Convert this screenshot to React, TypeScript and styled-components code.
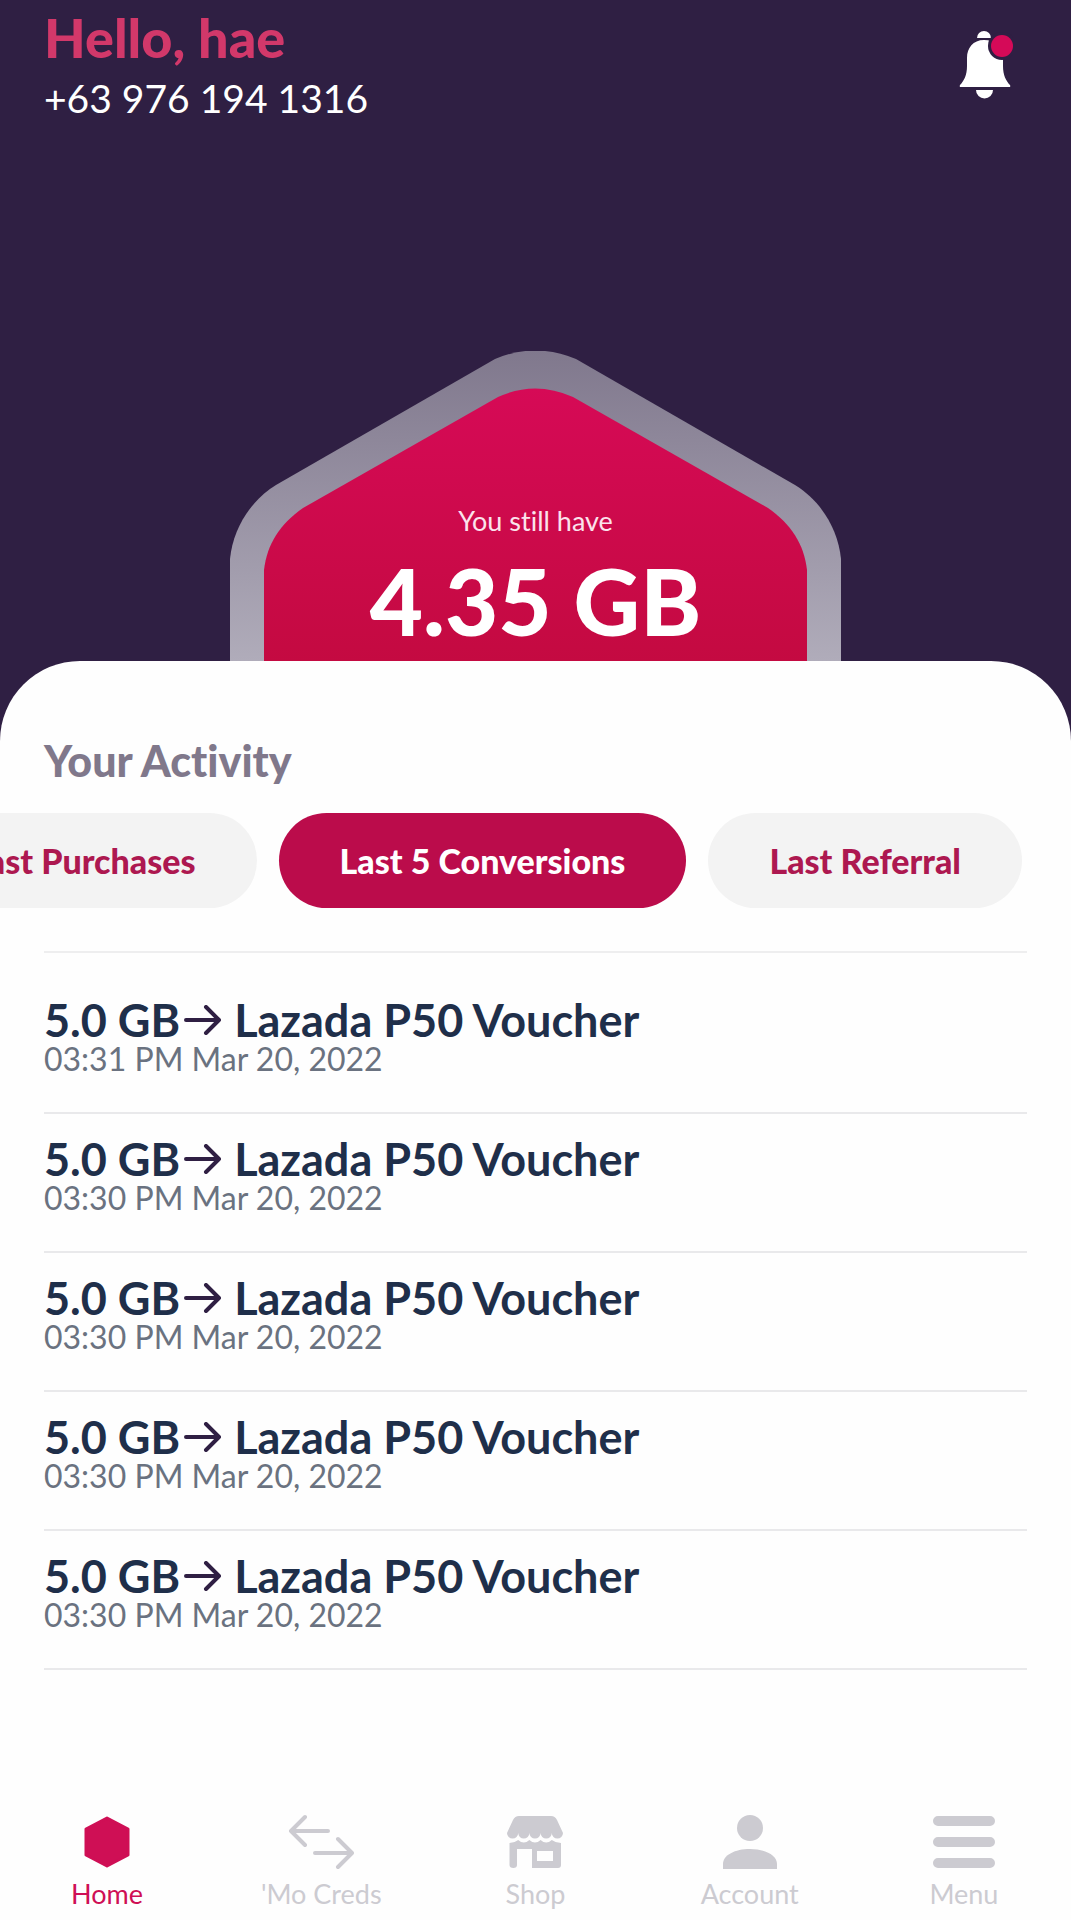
import React from "react";
import styled, { createGlobalStyle } from "styled-components";

const GlobalStyle = createGlobalStyle`
  *, *::before, *::after { box-sizing: border-box; }
  html { background: #fefefe; }
  body {
    margin: 0;
    font-family: Lato, "Liberation Sans", sans-serif;
    font-variant-ligatures: none;
  }
  h1, h2, h3, p, ul { margin: 0; padding: 0; font-weight: 400; }
  ul { list-style: none; }
  button { font-family: inherit; border: 0; cursor: pointer; }
`;

const Screen = styled.div`
  display: flex;
  flex-direction: column;
  min-height: 100vh;
  overflow-x: hidden;
  background: #2f1f43;
`;

const Header = styled.header`
  display: flex;
  justify-content: space-between;
  align-items: flex-start;
  padding: 8px 58px 0 44px;
`;

const Greeting = styled.h1`
  && { font-weight: 900; }
  font-size: 54px;
  line-height: 60px;
  color: #d2386a;
`;

const Phone = styled.p`
  font-size: 39px;
  line-height: 60px;
  color: #fff;
`;

const BellButton = styled.button`
  padding: 0;
  margin-top: 23px;
  background: none;
  line-height: 0;
`;

const Balance = styled.section`
  display: grid;
  justify-content: center;
  margin-top: 223px;
`;

const HexShape = styled.svg`
  grid-area: 1 / 1;
  display: block;
`;

const BalanceText = styled.div`
  grid-area: 1 / 1;
  display: flex;
  flex-direction: column;
  align-items: center;
  padding-top: 150px;
  color: #fff;
`;

const BalanceLabel = styled.p`
  font-size: 27px;
  line-height: 40px;
  color: #fbe3ec;
`;

const BalanceValue = styled.p`
  && { font-weight: 900; }
  font-size: 92px;
  line-height: 120px;
`;

const Sheet = styled.main`
  flex: 1;
  display: flex;
  flex-direction: column;
  padding-top: 70px;
  border-radius: 80px 80px 0 0;
  background: #fefefe;
`;

const SheetTitle = styled.h2`
  && { font-weight: 900; }
  padding: 0 44px;
  font-size: 43px;
  line-height: 60px;
  color: #80788b;
`;

const Filters = styled.div`
  display: flex;
  justify-content: flex-end;
  gap: 22px;
  padding-right: 49px;
  margin-top: 22px;
`;

const Pill = styled.button<{ $active?: boolean }>`
  flex: none;
  height: 95px;
  padding: 0 61px;
  border-radius: 48px;
  font-size: 34px;
  font-weight: 900;
  white-space: nowrap;
  color: ${(p) => (p.$active ? "#fff" : "#ad1850")};
  background: ${(p) => (p.$active ? "#bb0c4b" : "#f3f3f3")};
`;

const History = styled.ul`
  margin: 43px 44px 0;
  padding-top: 22px;
  border-top: 2px solid #eeeeef;
`;

const Row = styled.li`
  height: 139px;
  padding-top: 21px;
  border-bottom: 2px solid #e9e9eb;
`;

const RowTitle = styled.h3`
  && { font-weight: 700; }
  display: flex;
  align-items: center;
  font-size: 45px;
  line-height: 48px;
  color: #1f2f4a;
`;

const ArrowIcon = styled.svg`
  flex: none;
  margin: 0 12px 0 4px;
`;

const RowDate = styled.p`
  font-size: 32px;
  line-height: 30px;
  color: #6a7280;
`;

const TabBar = styled.nav`
  display: grid;
  grid-template-columns: repeat(5, 1fr);
  margin-top: auto;
  padding-bottom: 6px;
`;

const Tab = styled.a<{ $active?: boolean }>`
  display: flex;
  flex-direction: column;
  align-items: center;
  gap: 4px;
  text-decoration: none;
  font-size: 27px;
  line-height: 40px;
  color: ${(p) => (p.$active ? "#cf0f55" : "#cccbd1")};
`;

const BellIcon = () => (
  <svg width="54" height="68" viewBox="0 0 54 68" aria-hidden="true">
    <path d="M18 7a7 7 0 0 1 14 0z" fill="#fff" />
    <path
      d="M25 9C14 9 8 17 8 27v8c0 9-3 15-7 19q-1 2 1 2h48q2 0 1-2c-4-4-7-10-7-19v-8C44 17 36 9 25 9z"
      fill="#fff"
    />
    <path d="M17 59h17a8 8 0 0 1-17 0z" fill="#fff" />
    <circle cx="43" cy="15" r="14" fill="#2f1f43" />
    <circle cx="43" cy="15" r="11" fill="#d50a58" />
  </svg>
);

const Arrow = () => (
  <ArrowIcon width="38" height="30" viewBox="0 0 38 30" aria-label="to">
    <path
      d="M2 15h33M22 2l13 13-13 13"
      fill="none"
      stroke="#2f1f43"
      strokeWidth="4"
      strokeLinecap="round"
      strokeLinejoin="round"
    />
  </ArrowIcon>
);

const HomeIcon = () => (
  <svg width="66" height="56" viewBox="0 0 66 56" aria-hidden="true">
    <path
      d="M33 4 54 15v26L33 52 12 41V15z"
      fill="currentColor"
      stroke="currentColor"
      strokeWidth="3"
      strokeLinejoin="round"
    />
  </svg>
);

const CredsIcon = () => (
  <svg width="66" height="56" viewBox="0 0 66 56" aria-hidden="true">
    <path
      d="M40 17H3M17 3 3 17l14 14M27 39h36M50 25l14 14-14 14"
      fill="none"
      stroke="currentColor"
      strokeWidth="4"
      strokeLinecap="round"
      strokeLinejoin="round"
    />
  </svg>
);

const ShopIcon = () => (
  <svg width="66" height="56" viewBox="0 0 66 56" aria-hidden="true">
    <path
      d="M17 2h32q4 0 6 4l6 13a5.6 5.6 0 0 1-11.2 0a5.6 5.6 0 0 1-11.2 0a5.6 5.6 0 0 1-11.2 0a5.6 5.6 0 0 1-11.2 0a5.6 5.6 0 0 1-11.2 0l6-13q2-4 6-4z"
      fill="currentColor"
    />
    <path
      fillRule="evenodd"
      d="M7.5 29q5 0 8.7-3q5.6 5 11.2 0q5.6 5 11.2 0q5.6 5 11.2 0q4 3 9.2 3v22q0 3-3 3H30V35H15v16q0 3-3.7 3t-3.8-3zM35 37v10h16V37z"
      fill="currentColor"
    />
  </svg>
);

const AccountIcon = () => (
  <svg width="66" height="56" viewBox="0 0 66 56" aria-hidden="true">
    <circle cx="33" cy="14" r="13" fill="currentColor" />
    <path d="M6 55v-5c0-9 12-15 27-15s27 6 27 15v5z" fill="currentColor" />
  </svg>
);

const MenuIcon = () => (
  <svg width="66" height="56" viewBox="0 0 66 56" aria-hidden="true">
    <path
      d="M7 7h52M7 28h52M7 49h52"
      stroke="currentColor"
      strokeWidth="10"
      strokeLinecap="round"
    />
  </svg>
);

const conversions = [
  "03:31 PM Mar 20, 2022",
  "03:30 PM Mar 20, 2022",
  "03:30 PM Mar 20, 2022",
  "03:30 PM Mar 20, 2022",
  "03:30 PM Mar 20, 2022",
];

const tabs = [
  { label: "Home", Icon: HomeIcon, active: true },
  { label: "'Mo Creds", Icon: CredsIcon },
  { label: "Shop", Icon: ShopIcon },
  { label: "Account", Icon: AccountIcon },
  { label: "Menu", Icon: MenuIcon },
];

export default function App() {
  return (
    <Screen>
      <GlobalStyle />
      <Header>
        <div>
          <Greeting>Hello, hae</Greeting>
          <Phone>+63 976 194 1316</Phone>
        </div>
        <BellButton aria-label="Notifications">
          <BellIcon />
        </BellButton>
      </Header>

      <Balance>
        <HexShape width="611" height="310" viewBox="0 0 611 310" aria-hidden="true">
          <defs>
            <linearGradient id="rim" x1="0" y1="0" x2="0" y2="1">
              <stop offset="0" stopColor="#80788d" />
              <stop offset="1" stopColor="#b0acba" />
            </linearGradient>
            <linearGradient id="core" x1="0" y1="0" x2="0" y2="1">
              <stop offset="0" stopColor="#d60a56" />
              <stop offset="1" stopColor="#c40a41" />
            </linearGradient>
          </defs>
          <path
            d="M0 310V208C3 178 20 150 46 134L265 8Q305-9 346 8L565 134C591 150 608 178 611 208V310z"
            fill="url(#rim)"
          />
          <path
            d="M34 310V219C37 193 50 173 73 157L268 46Q305 29 343 46L538 157C561 173 574 193 577 219V310z"
            fill="url(#core)"
          />
        </HexShape>
        <BalanceText>
          <BalanceLabel>You still have</BalanceLabel>
          <BalanceValue>4.35 GB</BalanceValue>
        </BalanceText>
      </Balance>

      <Sheet>
        <SheetTitle>Your Activity</SheetTitle>
        <Filters>
          <Pill>Last Purchases</Pill>
          <Pill $active>Last 5 Conversions</Pill>
          <Pill>Last Referral</Pill>
        </Filters>
        <History>
          {conversions.map((date, i) => (
            <Row key={i}>
              <RowTitle>
                5.0 GB
                <Arrow />
                Lazada P50 Voucher
              </RowTitle>
              <RowDate>{date}</RowDate>
            </Row>
          ))}
        </History>
        <TabBar>
          {tabs.map(({ label, Icon, active }) => (
            <Tab key={label} href="#" $active={active}>
              <Icon />
              {label}
            </Tab>
          ))}
        </TabBar>
      </Sheet>
    </Screen>
  );
}
